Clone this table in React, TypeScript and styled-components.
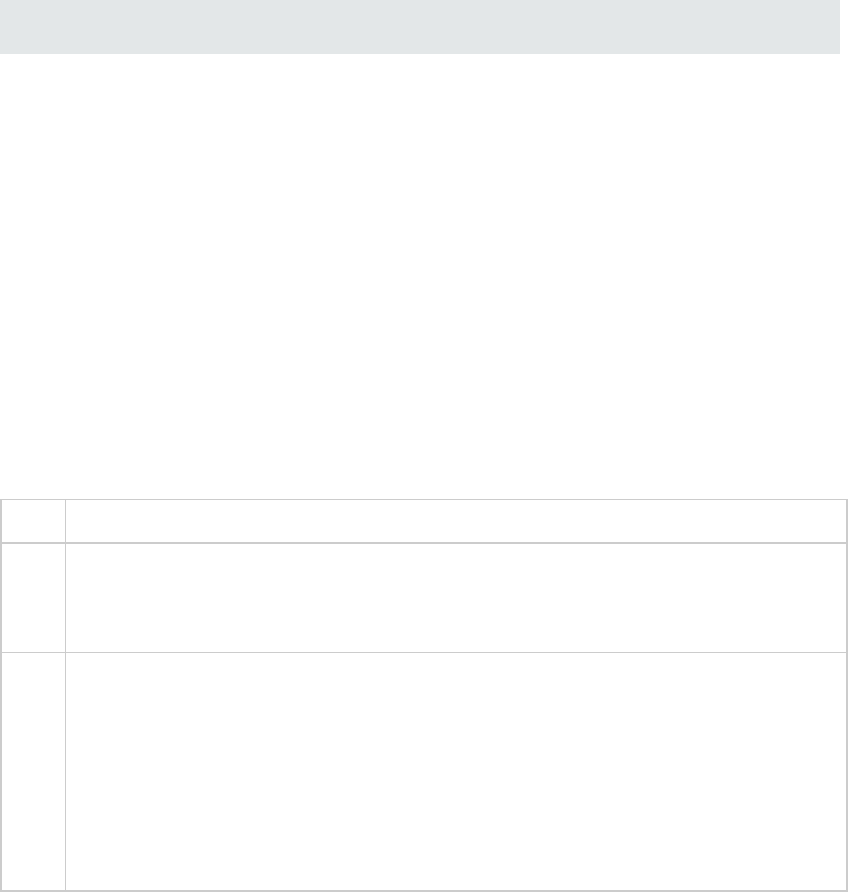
import React from "react";
import * as styledComponents from "styled-components";

const styled = styledComponents.default;
const { createGlobalStyle } = styledComponents;

type Row = {
  id: number;
  height: number;
};

const rows: Row[] = [
  { id: 1, height: 108 },
  { id: 2, height: 237 },
];

const GlobalStyle = createGlobalStyle`
  html, body {
    margin: 0;
    padding: 0;
    background: #ffffff;
    font-family: "Liberation Sans", Arial, sans-serif;
  }
`;

export default function App() {
  return (
    <Page>
      <GlobalStyle />
      <TopBar />
      <Table role="table">
        <HeadRow role="row">
          <IndexCell role="columnheader" />
          <MainCell role="columnheader" />
        </HeadRow>
        {rows.map((r, i) => (
          <BodyRow key={r.id} role="row" $height={r.height} $last={i === rows.length - 1}>
            <IndexCell role="cell" />
            <MainCell role="cell" />
          </BodyRow>
        ))}
      </Table>
    </Page>
  );
}

/* --- styles --- */

const Page = styled.div`
  width: 848px;
  min-height: 892px;
  display: flex;
  flex-direction: column;
`;

const TopBar = styled.div`
  width: 840px;
  height: 54px;
  background: #e3e7e8;
`;

const Table = styled.div`
  margin-top: 445px;
  display: flex;
  flex-direction: column;
  border-top: 1px solid #cccccc;
  border-left: 2px solid #cccccc;
  border-right: 2px solid #cccccc;
  border-bottom: 2px solid #cccccc;
`;

const HeadRow = styled.div`
  display: flex;
  height: 44px;
  box-sizing: border-box;
  border-bottom: 2px solid #cccccc;
`;

const BodyRow = styled.div<{ $height: number; $last: boolean }>`
  display: flex;
  box-sizing: border-box;
  height: ${p => p.$height + (p.$last ? 0 : 1)}px;
  border-bottom: ${p => (p.$last ? "none" : "1px solid #cccccc")};
`;

const IndexCell = styled.div`
  width: 64px;
  flex: none;
  box-sizing: border-box;
  border-right: 1px solid #cccccc;
`;

const MainCell = styled.div`
  flex: 1;
`;
